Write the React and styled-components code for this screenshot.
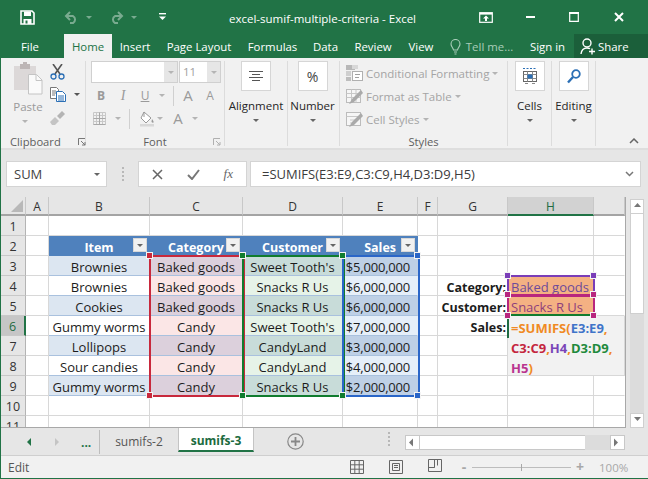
import React from "react";
import styled, { createGlobalStyle } from "styled-components";

const GREEN = "#217346";
const UI = '"Open Sans", "Noto Sans", sans-serif';

const Global = createGlobalStyle`
  html, body { margin: 0; padding: 0; background: #fff; }
  body { font-family: ${UI}; overflow: hidden; }
  * { box-sizing: border-box; }
`;

const Window = styled.div`
  width: 648px; height: 479px; display: flex; flex-direction: column;
  background: #e6e6e6; border-left: 1px solid ${GREEN}; border-bottom: 1px solid ${GREEN};
  overflow: hidden;
`;

/* ---- title bar ---- */
const TitleBar = styled.header`
  height: 34px; flex: none; display: flex; align-items: center; background: ${GREEN}; color: #fff; margin-left: -1px;
`;
const Qat = styled.div`
  width: 229px; flex: none; display: flex; align-items: center; padding-left: 20px;
`;
const QatItem = styled.span`
  display: inline-flex; margin-left: ${p => p.$gap || 0}px; opacity: ${p => p.$dim ? 0.4 : 1};
`;
const Title = styled.div`
  width: 187px; flex: none; font-size: 11.5px; white-space: nowrap; text-align: center; padding-top: 2px;
`;
const WinControls = styled.div`
  flex: 1; display: flex; align-items: center; padding-left: 63px;
`;
const WinBtn = styled.span`
  display: inline-flex; justify-content: center; margin-left: ${p => p.$gap || 0}px;
`;

/* ---- tabs ---- */
const TabRow = styled.nav`
  height: 24px; flex: none; display: flex; background: ${GREEN}; margin-left: -1px;
`;
const Tab = styled.div`
  width: ${p => p.$w}px; flex: none; display: flex; align-items: center; justify-content: ${p => p.$dark ? "flex-start" : "center"};
  gap: ${p => p.$dark ? 2 : 5}px; padding-left: ${p => p.$dark ? 6 : 0}px;
  font-size: 11.4px; white-space: nowrap; padding-top: ${p => p.$active ? 0 : 1}px;
  color: ${p => p.$active ? GREEN : p.$dim ? "#a9cdb9" : "#fff"};
  background: ${p => p.$active ? "#f1f1f1" : p.$dark ? "#1b5f3a" : "transparent"};
`;

/* ---- ribbon ---- */
const Ribbon = styled.section`
  height: 92px; flex: none; display: flex; background: #f1f1f1; border-bottom: 2px solid #dedede; position: relative;
`;
const Group = styled.div`
  width: ${p => p.$w}px; flex: none; display: flex; flex-direction: column; height: 85px; margin-top: 3px;
  border-right: 1px solid #dcdcdc;
`;
const GroupBody = styled.div`
  flex: 1; display: flex; min-height: 0;
`;
const GroupLabel = styled.div`
  height: 16px; flex: none; font-size: 11.2px; line-height: 16px; color: #5e5e5e; display: flex; align-items: center; margin-bottom: -4px;
  justify-content: ${p => p.$justify || "center"}; position: relative; padding: ${p => p.$pad || "0"};
`;
const Launcher = styled.span`
  display: inline-flex; margin-left: ${p => p.$gap}px;
`;
const PasteCol = styled.div`
  width: 49px; flex: none; padding: 1px 0 0 5px; display: flex; flex-direction: column; align-items: center; color: #9a9a9a;
  font-size: 11.5px; line-height: 14px;
`;
const PasteLabel = styled.div` margin-top: 5px; `;
const PasteCaret = styled.div` margin-top: 6px; margin-right: 6px; display: flex; `;
const ClipCol = styled.div`
  display: flex; flex-direction: column; gap: 8px; padding-top: 3px;
`;
const ClipRow = styled.div`
  display: flex; align-items: center; gap: 8px; height: 15px;
`;
const Caret = styled.i`
  display: inline-block; flex: none; width: 0; height: 0; margin-left: ${p => p.$gap || 0}px;
  border-left: 3px solid transparent; border-right: 3px solid transparent;
  border-top: 3px solid ${p => p.$c || "#b4b4b4"};
`;
const FontCol = styled.div`
  display: flex; flex-direction: column; padding-left: 5px; width: 100%;
`;
const ComboRow = styled.div`
  display: flex; gap: 1px; height: 22px; flex: none;
`;
const Combo = styled.div`
  width: ${p => p.$w}px; height: 22px; background: #fff; border: 1px solid #d0d0d0; display: flex; justify-content: flex-end;
  font-size: 11.5px; color: #a0a0a0;
  span { flex: 1; padding-left: 3px; line-height: 20px; }
  b { width: 13px; flex: none; background: #e6e6e6; display: flex; align-items: center; justify-content: center; }
`;
const ToolRow = styled.div`
  display: flex; align-items: center; height: 17px; margin-top: ${p => p.$mt}px; padding-left: ${p => p.$pl || 0}px; color: #9a9a9a;
`;
const Glyph = styled.span`
  display: inline-block; flex: none; width: ${p => p.$w || 14}px; text-align: center;
  font-size: ${p => p.$s || 13}px; line-height: 17px; font-weight: ${p => p.$b ? 700 : 400}; font-style: ${p => p.$i ? "italic" : "normal"};
  text-decoration: ${p => p.$u ? "underline" : "none"}; color: #9a9a9a; margin-left: ${p => p.$gap || 0}px;
  font-family: ${p => p.$sans ? UI : '"Liberation Serif", serif'};
`;
const VSep = styled.i`
  display: inline-block; flex: none; width: 1px; height: ${p => p.$h || 20}px; background: #d0d0d0; margin: 0 ${p => p.$r}px 0 ${p => p.$l}px;
`;
const BigCol = styled.div`
  flex: 1; display: flex; flex-direction: column; align-items: center; font-size: 11.5px; color: #262626; padding-right: ${p => p.$pr || 0}px;
`;
const BigBtn = styled.div`
  width: 30px; height: 30px; background: #fff; border: 1px solid #d6d6d6; display: flex; align-items: center; justify-content: center;
  font-size: 14px; color: #444; margin-bottom: 6px; flex: none;
`;
const BigLabel = styled.div`
  line-height: 17px; white-space: nowrap; margin-bottom: 5px;
`;
const StyleList = styled.div`
  display: flex; flex-direction: column; gap: 3px; padding: 2px 0 0 6px;
`;
const StyleRow = styled.div`
  height: 20px; display: flex; align-items: center; gap: 3px; font-size: 11.5px; white-space: nowrap; color: #a4a4a4;
`;
const Collapse = styled.span`
  position: absolute; right: 9px; bottom: 4px; display: inline-flex;
`;

/* ---- formula bar ---- */
const FormulaBand = styled.section`
  height: 47px; flex: none; display: flex; padding: 11px 7px 0 5px; background: #e6e6e6;
`;
const NameBox = styled.div`
  width: 101px; height: 26px; background: #fff; border: 1px solid #d4d4d4; display: flex; align-items: center; justify-content: space-between;
  padding: 0 6px 0 7px; font-size: 13px; color: #444;
`;
const Dots = styled.div`
  width: 31px; height: 26px; display: flex; flex-direction: column; align-items: center; justify-content: center; gap: 2px;
  i { width: 2px; height: 2px; background: #b8b8b8; }
`;
const FxBox = styled.div`
  width: 109px; height: 26px; background: #fff; border: 1px solid #d4d4d4; display: flex; align-items: center; justify-content: space-between;
  padding: 0 13px; margin-right: 3px; color: #666;
`;
const Fx = styled.span`
  font-family: "Liberation Serif", serif; font-style: italic; font-size: 13px;
`;
const FormulaInput = styled.div`
  flex: 1; height: 26px; background: #fff; border: 1px solid #d4d4d4; display: flex; align-items: center; justify-content: space-between;
  padding: 0 6px 0 11px; font-size: 13px; color: #3c3c3c; white-space: nowrap;
`;

/* ---- sheet ---- */
const SheetArea = styled.section`
  height: 231px; flex: none; display: flex; background: #e6e6e6;
`;
const Sheet = styled.div`
  position: relative; width: 625px; flex: none; height: 231px; overflow: hidden; background: #fff;
  display: grid; border-right: 1px solid #a8a8a8; border-bottom: 1px solid #a8a8a8;
  grid-template-columns: 25px 23px 101px 93px 100px 75px 20px 70px 86px 31px;
  grid-template-rows: 19px repeat(10, 20px) 12px;
  font-size: 13px; color: #1c1c1c;
`;
const Corner = styled.div`
  background: #e6e6e6; border-bottom: 2px solid #a4a4a4; border-right: 1px solid #c8c8c8; display: flex; align-items: flex-end; justify-content: flex-end;
  padding: 0 2px 2px 0;
`;
const ColHead = styled.div`
  background: ${p => p.$sel ? "#d2d2d2" : "#e6e6e6"}; border-bottom: 2px solid ${p => p.$sel ? GREEN : "#a4a4a4"}; border-right: 1px solid #c8c8c8;
  display: flex; align-items: center; justify-content: center; font-size: 12px; color: ${p => p.$sel ? "#1f6b41" : "#333"}; padding-top: 1px;
`;
const RowHead = styled.div`
  background: ${p => p.$sel ? "#c6c6c6" : "#e6e6e6"}; border-bottom: 1px solid #c8c8c8;
  border-right: ${p => p.$sel ? `2px solid ${GREEN}` : "1px solid #b4b4b4"};
  display: flex; align-items: ${p => p.$clip ? "flex-start" : "center"}; justify-content: center; font-size: 12.5px; padding-top: 2px;
  color: ${p => p.$sel ? "#1f6b41" : "#333"};
`;
const Cell = styled.div`
  display: flex; align-items: center; justify-content: ${p => p.$align || "center"}; white-space: nowrap; overflow: hidden;
  background: ${p => p.$bg || "#fff"};
  border-right: 1px solid ${p => p.$edge || "#d8d8d8"};
  border-bottom: 1px solid ${p => p.$line || "#d8d8d8"};
  padding: 3px ${p => p.$pr || 0}px 0 ${p => p.$pl || 0}px;
  font-weight: ${p => p.$bold ? 700 : 400};
  font-size: ${p => p.$bold ? 12.5 : 13}px;
  letter-spacing: ${p => p.$tight ? "-0.2px" : "0"};
  color: ${p => p.$color || "inherit"};
`;
const TableHead = styled(Cell)`
  background: #4f81bd; color: #fff; font-weight: 700; position: relative; border-color: #4f81bd; font-size: 12.5px;
`;
const HeadFilter = styled.span`
  position: absolute; right: 2px; top: 2px; width: 14px; height: 14px; background: #f1f1f1; border: 1px solid #d8d8d8;
  display: flex; align-items: center; justify-content: center;
`;
const Merged = styled.div`
  grid-column: 9 / 10; grid-row: 7 / 10; background: #f2f2f2; border-bottom: 1px solid #d8d8d8; border-right: 1px solid #d8d8d8; padding: 2px 0 0 3px;
  font-size: 13px; font-weight: 700; line-height: 20px; width: 117px; position: relative; z-index: 1; white-space: nowrap;
`;
const RefA = styled.span` color: ${p => p.$c}; `;

const Range = styled.div`
  position: absolute; left: ${p => p.$x}px; top: ${p => p.$y}px; width: ${p => p.$w}px; height: ${p => p.$h}px; pointer-events: none; z-index: 2;
  border: 2px solid ${p => p.$c};
  border-bottom-color: ${p => p.$bc || p.$c};
`;
const Handle = styled.i`
  position: absolute; width: 5px; height: 5px; z-index: 3; background: ${p => p.$c}; border: 1px solid #f4f4f4;
  left: ${p => p.$x - 3}px; top: ${p => p.$y - 3}px; box-sizing: content-box; margin: -1px 0 0 -1px;
`;
const ActiveMark = styled.i`
  position: absolute; z-index: 3; left: 506px; top: 119px; width: 2px; height: 22px; background: #1f6b41;
`;

const VScroll = styled.aside`
  flex: 1; display: flex; flex-direction: column; padding: 2px 4px 0 4px;
`;
const VBtn = styled.div`
  height: 15px; width: 14px; flex: none; background: #fff; border: 1px solid #cfcfcf; display: flex; align-items: center; justify-content: center;
`;
const VThumb = styled.div`
  height: 100px; width: 14px; flex: none; background: #fff; border: 1px solid #cfcfcf; border-top: 0;
`;
const VTrack = styled.div`
  flex: 1; width: 14px; background: #dcdcdc;
`;

/* ---- tabs bar ---- */
const SheetTabs = styled.section`
  height: 28px; flex: none; display: flex; align-items: flex-start; background: #e6e6e6; border-bottom: 1px solid #cfcfcf;
`;
const Nav = styled.div`
  width: 99px; height: 24px; flex: none; display: flex; align-items: center; padding-left: 26px; color: ${GREEN};
  border-right: 1px solid #bdbdbd; margin-top: 2px; font-weight: 700; font-size: 12px;
`;
const NavArrow = styled.i`
  display: inline-block; width: 0; height: 0; margin-right: ${p => p.$mr}px;
  border-top: 4px solid transparent; border-bottom: 4px solid transparent;
  border-${p => p.$dir === "r" ? "left" : "right"}: 4px solid ${p => p.$c};
`;
const SheetTab = styled.div`
  height: 24px; width: ${p => p.$w}px; flex: none; display: flex; align-items: center; justify-content: center; font-size: 12px; padding-top: 2px;
  font-weight: ${p => p.$active ? 700 : 400}; color: ${p => p.$active ? "#1c6b40" : "#555"};
  background: ${p => p.$active ? "#fff" : "transparent"}; border-bottom: ${p => p.$active ? `2px solid ${GREEN}` : "0"};
  border-left: ${p => p.$active ? "1px solid #c4c4c4" : "0"}; border-right: ${p => p.$active ? "1px solid #c4c4c4" : "0"};
`;
const AddBtn = styled.span`
  display: inline-flex; margin: 5px 0 0 33px;
`;
const HDots = styled.div`
  width: 2px; margin: 4px 15px 0 84px; display: flex; flex-direction: column; gap: 2px;
  i { width: 2px; height: 2px; background: #b8b8b8; }
`;
const HScroll = styled.div`
  width: 220px; height: 15px; margin-top: 7px; display: flex; flex: none;
`;
const HBtn = styled.div`
  width: 15px; height: 15px; flex: none; background: #fff; border: 1px solid #c8c8c8; display: flex; align-items: center; justify-content: center;
`;
const HThumb = styled.div`
  width: 165px; background: #fff; border-top: 1px solid #c8c8c8; border-bottom: 1px solid #c8c8c8; flex: none;
`;
const HTrack = styled.div` flex: 1; background: #dcdcdc; `;

/* ---- status bar ---- */
const Status = styled.footer`
  flex: 1; display: flex; align-items: center; background: #f1f1f1; font-size: 12px; color: #555; padding-left: 7px;
`;
const StatusLeft = styled.div` width: 342px; flex: none; `;
const ViewIcons = styled.div`
  display: flex; gap: 25px; align-items: center; width: 109px; flex: none;
`;
const Zoom = styled.div`
  display: flex; align-items: center; color: #a8a8a8; font-size: 11.5px;
`;
const ZoomTrack = styled.div`
  width: 99px; height: 1px; background: #bdbdbd; margin: 0 4px 0 3px; position: relative;
  i { position: absolute; left: 49px; top: -3px; width: 1px; height: 7px; background: #a8a8a8; }
`;
const ZoomSign = styled.span` font-size: 14px; font-weight: 700; width: 10px; text-align: center; line-height: 12px; `;
const ZoomPct = styled.span` margin-left: 14px; `;

/* ---- icons ---- */
const Svg = ({ w = 16, h = 16, vb, children, ...r }) => (
  <svg width={w} height={h} viewBox={vb || `0 0 ${w} ${h}`} fill="none" {...r}>{children}</svg>
);
const SaveIcon = () => (
  <Svg w={15} h={15}><path d="M1 1h11l2 2v11H1z" stroke="#fff" strokeWidth="1.6"/><rect x="4" y="1.5" width="7" height="4.5" fill="#fff"/><rect x="3.5" y="9" width="8" height="5" fill="#fff"/><rect x="5.5" y="10.5" width="2" height="3" fill={GREEN}/></Svg>
);
const UndoIcon = ({ flip }) => (
  <Svg w={15} h={13} style={flip ? { transform: "scaleX(-1)" } : undefined}>
    <path d="M3 5h6a4 4 0 0 1 0 7H6" stroke="#fff" strokeWidth="2"/><path d="M6 1L2 5l4 4" stroke="#fff" strokeWidth="2"/>
  </Svg>
);
const QatIcon = () => (
  <Svg w={7} h={8}><rect x="0" y="0" width="7" height="1.4" fill="#fff"/><path d="M0 3.5h7L3.5 7z" fill="#fff"/></Svg>
);
const DisplayIcon = () => (
  <Svg w={14} h={11}><rect x=".7" y=".7" width="12.6" height="9.6" stroke="#fff" strokeWidth="1.2"/><rect x="1" y="1" width="12" height="1.6" fill="#fff"/><path d="M7 3.5L4 6.5h2V9h2V6.5h2z" fill="#fff"/></Svg>
);
const BulbIcon = () => (
  <Svg w={11} h={16}><path d="M3.5 11C3 8.5 1 7.5 1 5a4.5 4.5 0 0 1 9 0c0 2.500-2 3.500-2.500 6z" stroke="#a9cdb9" strokeWidth="1.100"/><path d="M4 13h3M4.500 15h2" stroke="#a9cdb9" strokeWidth="1.100"/></Svg>
);
const ShareIcon = () => (
  <Svg w={16} h={17}><circle cx="7" cy="5" r="4" stroke="#fff" strokeWidth="1.400"/><path d="M1 16c.5-4 2.500-6 6-6 1 0 2 .2 3 .7" stroke="#fff" strokeWidth="1.400"/><path d="M12 10.500v6M9 13.500h6" stroke="#fff" strokeWidth="1.400"/></Svg>
);
const PasteIcon = () => (
  <Svg w={29} h={33}>
    <rect x="0" y="4" width="22" height="24" fill="#dcd8d8"/><rect x="6" y="2" width="10" height="5" fill="#bdb6b6"/><rect x="9" y="0" width="4" height="3" fill="#bdb6b6"/>
    <path d="M14.500 12.500h8l5.500 5.500v14h-13.500z" fill="#fafafa" stroke="#c4c4c4"/><path d="M22 13v5.500h6" stroke="#c4c4c4"/>
  </Svg>
);
const CutIcon = () => (
  <Svg w={15} h={16}>
    <path d="M3 0l7 10M12 0L5 10" stroke="#555" strokeWidth="1.600"/><circle cx="3.500" cy="12.500" r="2.500" stroke="#2b6fb5" strokeWidth="1.300"/><circle cx="11.500" cy="12.500" r="2.500" stroke="#2b6fb5" strokeWidth="1.300"/>
  </Svg>
);
const CopyIcon = () => (
  <Svg w={16} h={15}>
    <path d="M.5.500h6l2 2v9H.5z" fill="#fff" stroke="#777"/><path d="M2 4h4M2 6h4M2 8h3" stroke="#777"/>
    <path d="M6.500 4.500h6l3 3v7h-9z" fill="#fff" stroke="#2b6fb5"/><path d="M8 9h6M8 11h6M8 13h6" stroke="#2b6fb5"/>
  </Svg>
);
const BrushIcon = () => (
  <Svg w={15} h={14}><path d="M0 11l5-5 4 4-4 4H2z" fill="#c4c4c4"/><path d="M7 5l5-5 3 3-5 5z" fill="#b4b4b4"/></Svg>
);
const LauncherIcon = ({ c = "#777" }) => (
  <Svg w={8} h={8}><path d="M.5 7V.5H7" stroke={c}/><path d="M3 3l4 4M7 4v3H4" stroke={c}/></Svg>
);
const BordersIcon = () => (
  <Svg w={13} h={13}><path d="M.5.500h12v12H.5zM6.500.500v12M.5 6.500h12M3.500.500v12M9.500.500v12M.5 3.500h12M.5 9.500h12" stroke="#c8c8c8"/><path d="M.5 12.500h12M.5 6.500h12M6.500.500v12" stroke="#a8a8a8"/></Svg>
);
const FillIcon = () => (
  <Svg w={17} h={17}><path d="M5 2l7 6-5 5-5-5z" fill="#fff" stroke="#999"/><path d="M5 2v5" stroke="#999"/><path d="M13 9c1 1.500 2 2.500 1.500 3.500-1 .5-2 0-2-1z" fill="#999"/><rect x="1" y="14" width="14" height="2.500" fill="#d8d8d8"/></Svg>
);
const AlignIcon = () => (
  <Svg w={14} h={11}><path d="M0 .5h14M3 3.500h8M0 6.500h14M3 9.500h8" stroke="#555"/></Svg>
);
const CondIcon = () => (
  <Svg w={17} h={17}>
    <rect x="0" y="0" width="9" height="5" fill="#b8b8b8"/><rect x="0" y="6" width="5" height="5" fill="#cfcfcf"/><rect x="0" y="12" width="5" height="4" fill="#bdbdbd"/><rect x="6" y="0" width="6" height="4" fill="#d8d8d8"/>
    <rect x="6.500" y="6.500" width="10" height="9" fill="#fff" stroke="#b0b0b0"/><path d="M9 9.500h5M9 12.500h4" stroke="#a0a0a0"/>
  </Svg>
);
const TableIcon = ({ cell }) => (
  <Svg w={17} h={17}>
    <rect x=".5" y="1.500" width="14" height="13" fill="#f6f6f6" stroke="#bcbcbc"/>
    {!cell && <path d="M.5 5.500h14M.5 9.500h14M5.500 1.500v13M10 1.500v13" stroke="#c8c8c8"/>}
    {cell && <path d="M.5 5.500h14M4 9h7M4 12h5" stroke="#c8c8c8"/>}
    <path d="M15 2L6 11l-3 5 5-2 9-9z" fill="#aaa"/>
  </Svg>
);
const CellsIcon = () => (
  <Svg w={16} h={18}>
    <path d="M1 1.500h14" stroke="#2b6fb5" strokeDasharray="2 1.500"/><rect x="1.500" y="4.500" width="13" height="10" fill="#fff" stroke="#666"/>
    <path d="M1.500 7.500h13M1.500 11.500h13M5.500 4.500v10M10.500 4.500v10" stroke="#888"/><rect x="5.500" y="7.500" width="5" height="4" fill="#2b6fb5"/><path d="M3 16.500h3M10 16.500h3" stroke="#888"/>
  </Svg>
);
const SearchIcon = () => (
  <Svg w={14} h={15}><circle cx="9" cy="5" r="3.800" stroke="#2b6fb5" strokeWidth="1.800"/><path d="M6 8l-5 5.500" stroke="#2b6fb5" strokeWidth="2.400"/></Svg>
);
const FilterCaret = () => <Caret $c="#666" />;
const ArrowBtn = ({ d }) => {
  const m = { u: "M1 5h7L4.500 1z", d: "M1 1h7L4.500 5z", l: "M5 .5v8L1 4.500z", r: "M1 .5v8l4-4z" };
  return <Svg w={9} h={9}><path d={m[d]} fill="#777"/></Svg>;
};

/* ---- data ---- */
const COLS = ["A", "B", "C", "D", "E", "F", "G", "H", "I"];
const DATA = [
  ["Brownies", "Baked goods", "Sweet Tooth's", "$5,000,000"],
  ["Brownies", "Baked goods", "Snacks R Us", "$6,000,000"],
  ["Cookies", "Baked goods", "Snacks R Us", "$6,000,000"],
  ["Gummy worms", "Candy", "Sweet Tooth's", "$7,000,000"],
  ["Lollipops", "Candy", "CandyLand", "$3,000,000"],
  ["Sour candies", "Candy", "CandyLand", "$4,000,000"],
  ["Gummy worms", "Candy", "Snacks R Us", "$2,000,000"],
];
const TINTS = [
  ["#dce6f1", "#ffffff"],
  ["#dcd0dc", "#fbe6e6"],
  ["#c8dcd9", "#e6f3e8"],
  ["#bed0e6", "#e6eff9"],
];
const LINE = "#a9c1de";
const SIDE = {
  4: { label: "Category:", text: "Baked goods", tc: "#6d4a9a" },
  5: { label: "Customer:", text: "Snacks R Us", tc: "#8d3f7c" },
  6: { label: "Sales:" },
};

function SheetRow({ n }) {
  const d = n >= 3 && n <= 9 ? DATA[n - 3] : null;
  const side = SIDE[n];
  const inMerged = n >= 6 && n <= 8;
  return (
    <>
      <RowHead $sel={n === 6} $clip={n === 11}>{n}</RowHead>
      <Cell />
      {n === 2 ? (
        <>
          {["Item", "Category", "Customer"].map(t => (
            <TableHead key={t}>{t}<HeadFilter><FilterCaret /></HeadFilter></TableHead>
          ))}
          <TableHead $align="flex-end" $pr={21}>Sales<HeadFilter><FilterCaret /></HeadFilter></TableHead>
        </>
      ) : d ? (
        d.map((t, i) => (
          <Cell key={i} $bg={TINTS[i][(n - 3) % 2]} $line={LINE} $edge="transparent" $tight={i === 3} $align={i === 3 ? "flex-end" : "center"} $pr={i === 3 ? 7 : 0}>{t}</Cell>
        ))
      ) : (
        <><Cell /><Cell /><Cell /><Cell /></>
      )}
      <Cell />
      {side ? <Cell $bold $align="flex-end" $pr={1} $edge="transparent">{side.label}</Cell> : <Cell />}
      {side && side.text ? (
        <Cell $bg="#f4b183" $align="flex-start" $pl={3} $color={side.tc}>{side.text}</Cell>
      ) : n === 6 ? (
        <Merged>
          <RefA $c="#f08a24">=SUMIFS(</RefA><RefA $c="#3f74c9">E3:E9</RefA><RefA $c="#f08a24">,</RefA><br />
          <RefA $c="#c4263e">C3:C9</RefA><RefA $c="#f08a24">,</RefA><RefA $c="#7a45b8">H4</RefA><RefA $c="#f08a24">,</RefA><RefA $c="#1f8a3c">D3:D9</RefA><RefA $c="#f08a24">,</RefA><br />
          <RefA $c="#b9358f">H5</RefA><RefA $c="#f08a24">)</RefA>
        </Merged>
      ) : inMerged ? null : <Cell />}
      <Cell $edge="transparent" $bg={inMerged ? "#f2f2f2" : "#fff"} />
    </>
  );
}

const RED = "#c8283c", GRN = "#107c2e", BLU = "#2a66c8", PUR = "#7a3db8", MAG = "#b8267e";

export default function App() {
  return (
    <Window>
      <Global />
      <TitleBar>
        <Qat>
          <QatItem><SaveIcon /></QatItem>
          <QatItem $gap={29} $dim><UndoIcon /></QatItem>
          <QatItem $gap={7} $dim><Caret $c="#fff" /></QatItem>
          <QatItem $gap={17} $dim><UndoIcon flip /></QatItem>
          <QatItem $gap={7} $dim><Caret $c="#fff" /></QatItem>
          <QatItem $gap={22}><QatIcon /></QatItem>
        </Qat>
        <Title>excel-sumif-multiple-criteria - Excel</Title>
        <WinControls>
          <WinBtn><DisplayIcon /></WinBtn>
          <WinBtn $gap={33}><Svg w={9} h={3}><rect width="9" height="2" fill="#fff"/></Svg></WinBtn>
          <WinBtn $gap={34}><Svg w={10} h={10}><path d="M.7.700h8.600v8.600H.7z" stroke="#fff" strokeWidth="1.200"/><rect x="0" y="0" width="10" height="2" fill="#fff"/></Svg></WinBtn>
          <WinBtn $gap={35}><Svg w={10} h={10}><path d="M1 1l8 8M9 1l-8 8" stroke="#fff" strokeWidth="2"/></Svg></WinBtn>
        </WinControls>
      </TitleBar>

      <TabRow>
        <Tab $w={60}>File</Tab>
        <Tab $w={4} />
        <Tab $w={48} $active>Home</Tab>
        <Tab $w={46}>Insert</Tab>
        <Tab $w={82}>Page Layout</Tab>
        <Tab $w={65}>Formulas</Tab>
        <Tab $w={41}>Data</Tab>
        <Tab $w={54}>Review</Tab>
        <Tab $w={42}>View</Tab>
        <Tab $w={79} $dim><BulbIcon />Tell me...</Tab>
        <Tab $w={53}>Sign in</Tab>
        <Tab $w={74} $dark><ShareIcon />Share</Tab>
      </TabRow>

      <Ribbon>
        <Group $w={85}>
          <GroupBody>
            <PasteCol>
              <PasteIcon />
              <PasteLabel>Paste</PasteLabel>
              <PasteCaret><Caret /></PasteCaret>
            </PasteCol>
            <ClipCol>
              <ClipRow><CutIcon /></ClipRow>
              <ClipRow><CopyIcon /><Caret $c="#555" /></ClipRow>
              <ClipRow><BrushIcon /></ClipRow>
            </ClipCol>
          </GroupBody>
          <GroupLabel $justify="flex-start" $pad="0 0 0 9px">Clipboard<Launcher $gap={17}><LauncherIcon /></Launcher></GroupLabel>
        </Group>
        <Group $w={139}>
          <GroupBody>
            <FontCol>
              <ComboRow>
                <Combo $w={87}><b style={{ marginLeft: "auto" }}><Caret /></b></Combo>
                <Combo $w={42}><span>11</span><b><Caret /></b></Combo>
              </ComboRow>
              <ToolRow $mt={4} $pl={3}>
                <Glyph $b $sans $s={12}>B</Glyph>
                <Glyph $i $gap={8} $s={14}>I</Glyph>
                <Glyph $u $sans $gap={8} $s={12}>U</Glyph>
                <Caret $gap={7} />
                <VSep $l={8} $r={7} />
                <Glyph $sans $s={15}>A</Glyph>
                <Glyph $sans $s={12} $gap={8}>A</Glyph>
              </ToolRow>
              <ToolRow $mt={6} $pl={2}>
                <BordersIcon />
                <Caret $gap={9} />
                <VSep $l={8} $r={9} />
                <FillIcon />
                <Caret $gap={1} />
                <Glyph $sans $s={15} $gap={8}>A</Glyph>
                <Caret $gap={7} />
              </ToolRow>
            </FontCol>
          </GroupBody>
          <GroupLabel>Font<Launcher $gap={0} style={{ position: "absolute", right: 3 }}><LauncherIcon c="#b0b0b0" /></Launcher></GroupLabel>
        </Group>
        <Group $w={63}>
          <BigCol>
            <BigBtn><AlignIcon /></BigBtn>
            <BigLabel>Alignment</BigLabel>
            <Caret $c="#666" />
          </BigCol>
        </Group>
        <Group $w={52}>
          <BigCol $pr={2}>
            <BigBtn>%</BigBtn>
            <BigLabel>Number</BigLabel>
            <Caret $c="#666" />
          </BigCol>
        </Group>
        <Group $w={168}>
          <GroupBody>
            <StyleList>
              <StyleRow><CondIcon />Conditional Formatting<Caret /></StyleRow>
              <StyleRow><TableIcon />Format as Table<Caret /></StyleRow>
              <StyleRow><TableIcon cell />Cell Styles<Caret /></StyleRow>
            </StyleList>
          </GroupBody>
          <GroupLabel>Styles</GroupLabel>
        </Group>
        <Group $w={44}>
          <BigCol>
            <BigBtn><CellsIcon /></BigBtn>
            <BigLabel>Cells</BigLabel>
            <Caret $c="#666" />
          </BigCol>
        </Group>
        <Group $w={44}>
          <BigCol>
            <BigBtn><SearchIcon /></BigBtn>
            <BigLabel>Editing</BigLabel>
            <Caret $c="#666" />
          </BigCol>
        </Group>
        <Collapse><Svg w={10} h={6}><path d="M1 5l4-4 4 4" stroke="#666" strokeWidth="1.500"/></Svg></Collapse>
      </Ribbon>

      <FormulaBand>
        <NameBox>SUM<Caret $c="#666" /></NameBox>
        <Dots><i /><i /><i /><i /></Dots>
        <FxBox>
          <Svg w={11} h={11}><path d="M1 1l9 9M10 1l-9 9" stroke="#666" strokeWidth="1.500"/></Svg>
          <Svg w={13} h={11}><path d="M1 6l4 4 7-9" stroke="#777" strokeWidth="2"/></Svg>
          <Fx>fx</Fx>
        </FxBox>
        <FormulaInput>
          =SUMIFS(E3:E9,C3:C9,H4,D3:D9,H5)
          <Svg w={9} h={6}><path d="M1 1l3.500 3.500L8 1" stroke="#777" strokeWidth="1.500"/></Svg>
        </FormulaInput>
      </FormulaBand>

      <SheetArea>
        <Sheet>
          <Corner><Svg w={12} h={12}><path d="M12 0v12H0z" fill="#b8b8b8"/></Svg></Corner>
          {COLS.map(c => <ColHead key={c} $sel={c === "H"}>{c === "I" ? "" : c}</ColHead>)}
          {[1, 2, 3, 4, 5, 6, 7, 8, 9, 10, 11].map(n => <SheetRow key={n} n={n} />)}

          <Range $x={148} $y={58} $w={96} $h={142} $c={RED} />
          <Range $x={241} $y={58} $w={103} $h={142} $c={GRN} />
          <Range $x={341} $y={58} $w={78} $h={142} $c={BLU} />
          <Range $x={506} $y={78} $w={88} $h={21} $c={PUR} $bc={MAG} />
          <Range $x={506} $y={98} $w={88} $h={21} $c={MAG} $bc="#107c2e" />
          <ActiveMark />
          {[[148, RED], [241, GRN], [341, GRN], [416, BLU]].map(([x, c]) => <Handle key={x} $x={x + 1} $y={59} $c={c} />)}
          {[[148, RED], [241, GRN], [341, GRN], [416, BLU]].map(([x, c]) => <Handle key={x} $x={x + 1} $y={199} $c={c} />)}
          <Handle $x={507} $y={79} $c={PUR} /><Handle $x={593} $y={79} $c={PUR} />
          <Handle $x={507} $y={98} $c={MAG} /><Handle $x={593} $y={98} $c={MAG} />
          <Handle $x={507} $y={119} $c={MAG} /><Handle $x={593} $y={119} $c={MAG} />
        </Sheet>
        <VScroll>
          <VBtn><ArrowBtn d="u" /></VBtn>
          <VThumb />
          <VTrack />
          <VBtn><ArrowBtn d="d" /></VBtn>
        </VScroll>
      </SheetArea>

      <SheetTabs>
        <Nav>
          <NavArrow $c={GREEN} $mr={24} />
          <NavArrow $c="#c4c4c4" $dir="r" $mr={22} />
          ...
        </Nav>
        <SheetTab $w={78}>sumifs-2</SheetTab>
        <SheetTab $w={76} $active>sumifs-3</SheetTab>
        <AddBtn><Svg w={17} h={17}><circle cx="8.500" cy="8.500" r="7.700" stroke="#888" strokeWidth="1.200"/><path d="M8.500 4v9M4 8.500h9" stroke="#888" strokeWidth="1.800"/></Svg></AddBtn>
        <HDots><i /><i /><i /><i /></HDots>
        <HScroll>
          <HBtn><ArrowBtn d="l" /></HBtn>
          <HThumb />
          <HTrack />
          <HBtn><ArrowBtn d="r" /></HBtn>
        </HScroll>
      </SheetTabs>

      <Status>
        <StatusLeft>Edit</StatusLeft>
        <ViewIcons>
          <Svg w={14} h={14}><path d="M.5.500h13v13H.5zM4.800.500v13M9.200.500v13M.5 4.800h13M.5 9.200h13" stroke="#666"/></Svg>
          <Svg w={14} h={14}><path d="M.5.500h13v13H.5z" stroke="#666"/><path d="M3.500 3.500h7v7h-7zM5 5.500h4M5 7.500h4" stroke="#666"/></Svg>
          <Svg w={14} h={14} style={{ marginTop: -3 }}><path d="M.5.500h13v12H.5zM.5 8.500h6v-8M6.500 8.500V.500M9.500.500v6" stroke="#666"/></Svg>
        </ViewIcons>
        <Zoom>
          <ZoomSign>-</ZoomSign>
          <ZoomTrack><i /></ZoomTrack>
          <ZoomSign>+</ZoomSign>
          <ZoomPct>100%</ZoomPct>
        </Zoom>
      </Status>
    </Window>
  );
}
